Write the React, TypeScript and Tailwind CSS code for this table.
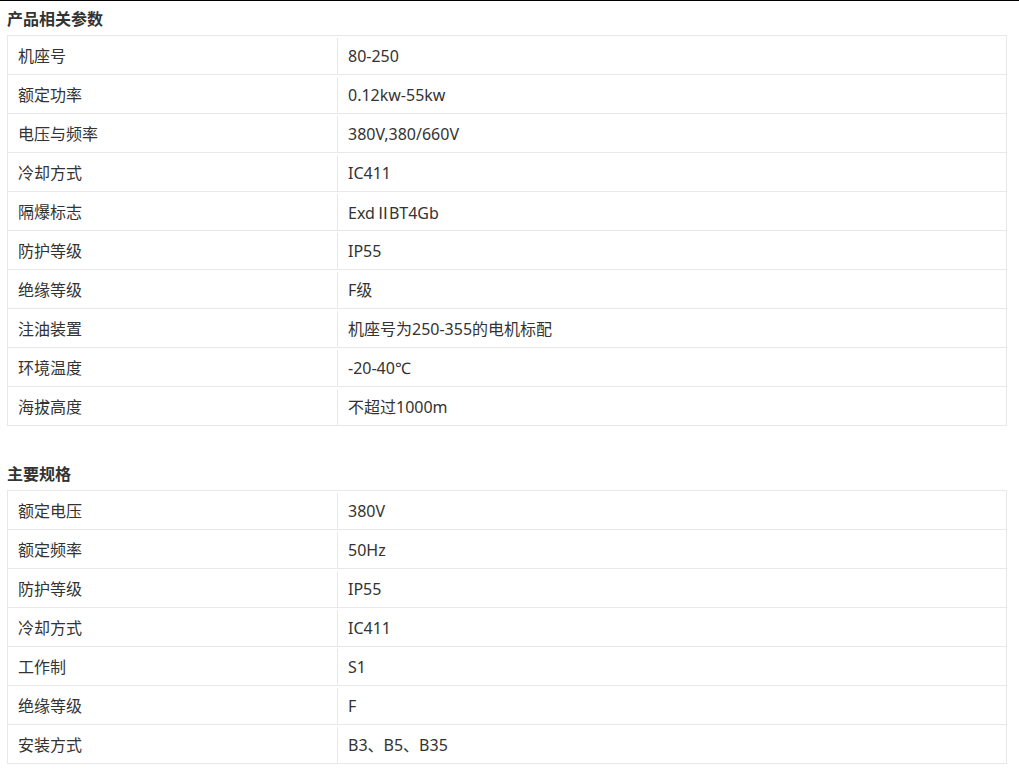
const params: [string, string][] = [
  ["机座号", "80-250"],
  ["额定功率", "0.12kw-55kw"],
  ["电压与频率", "380V,380/660V"],
  ["冷却方式", "IC411"],
  ["隔爆标志", "ExdⅡBT4Gb"],
  ["防护等级", "IP55"],
  ["绝缘等级", "F级"],
  ["注油装置", "机座号为250-355的电机标配"],
  ["环境温度", "-20-40℃"],
  ["海拔高度", "不超过1000m"],
];

const specs: [string, string][] = [
  ["额定电压", "380V"],
  ["额定频率", "50Hz"],
  ["防护等级", "IP55"],
  ["冷却方式", "IC411"],
  ["工作制", "S1"],
  ["绝缘等级", "F"],
  ["安装方式", "B3、B5、B35"],
];

// the roman numeral renders too wide in Noto Sans, CJK face is closer
function Value({ text }: { text: string }) {
  if (!text.includes("Ⅱ")) return <>{text}</>;
  const [a, b] = text.split("Ⅱ");
  return (
    <>
      {a}
      <span className="tracking-[-2px]" style={{ fontFamily: '"Noto Sans CJK SC", sans-serif' }}>
        Ⅱ
      </span>
      {b}
    </>
  );
}

function SpecTable({ title, rows }: { title: string; rows: [string, string][] }) {
  return (
    <div>
      <h3 className="h-[34px] pl-[7px] pt-[2px] text-[16px] font-bold leading-[33px] text-[#333]">
        {title}
      </h3>
      <div className="ml-[7px] w-[1000px] border-t border-l border-r border-[#e8e8e8]">
        {rows.map(([k, v]) => (
          <div key={k} className="flex h-[39px] border-b border-[#e8e8e8] pt-[2px] text-[16px] text-[#333]">
            <div className="flex w-[330px] items-center border-r border-[#e8e8e8] pl-[10px]">{k}</div>
            <div className="flex flex-1 items-center pl-[10px]">
              <span>
                <Value text={v} />
              </span>
            </div>
          </div>
        ))}
      </div>
    </div>
  );
}

export default function App() {
  return (
    <div
      className="min-h-screen border-t border-black bg-white"
      style={{ fontFamily: '"Noto Sans", "Noto Sans CJK SC", sans-serif' }}
    >
      <SpecTable title="产品相关参数" rows={params} />
      <div className="mt-[30px]">
        <SpecTable title="主要规格" rows={specs} />
      </div>
    </div>
  );
}
